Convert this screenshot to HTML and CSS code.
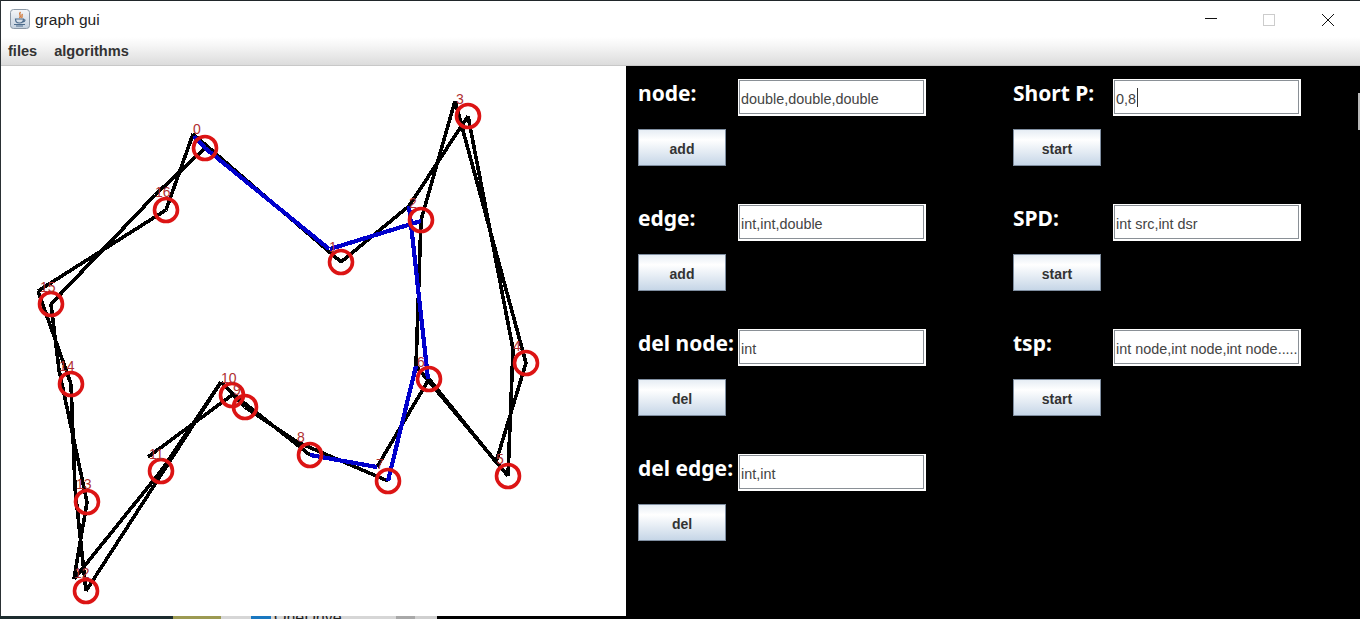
FILE: index.html
```html
<!DOCTYPE html>
<html lang="en">
<head>
  <meta charset="UTF-8" />
  <meta name="viewport" content="width=device-width, initial-scale=1.0"/>
  <title>graph gui</title>
  <link rel="stylesheet" href="styles.css">
</head>
<body>

<div class="window">
  <div class="titlebar">
    <svg class="app-icon" width="20" height="20" viewBox="0 0 20 20">
      <defs>
        <linearGradient id="iconBg" x1="0" y1="0" x2="0" y2="1">
          <stop offset="0" stop-color="#f4f6f8"/>
          <stop offset="1" stop-color="#c3d0de"/>
        </linearGradient>
      </defs>
      <rect x="0.5" y="0.5" width="19" height="19" rx="3" fill="url(#iconBg)" stroke="#8b98a6"/>
      <path d="M10.5 3 C8 5.5 12 6.5 9.5 9 M12.5 5 C11 6.5 13 7.5 11.5 9" fill="none" stroke="#d0702a" stroke-width="1.3"/>
      <path d="M5.5 10 H13.5 C13.5 13 12 14 9.5 14 C7 14 5.5 13 5.5 10 Z M13.5 10.5 C15.5 10.5 15.5 12.5 13 12.8" fill="none" stroke="#4d6c8c" stroke-width="1.2"/>
      <path d="M4 15.5 H15 M6 17 H13" stroke="#4d6c8c" stroke-width="1"/>
    </svg>
    <span class="app-title">graph gui</span>
    <div class="win-controls">
      <span class="win-btn"><svg width="14" height="14" viewBox="0 0 14 14"><path d="M1 5.5 H13" stroke="#111" stroke-width="1"/></svg></span>
      <span class="win-btn"><svg width="14" height="14" viewBox="0 0 14 14"><rect x="1.5" y="1.5" width="11" height="11" fill="none" stroke="#ccc"/></svg></span>
      <span class="win-btn"><svg width="14" height="14" viewBox="0 0 14 14"><path d="M1 1 L13 13 M13 1 L1 13" stroke="#111" stroke-width="1"/></svg></span>
    </div>
  </div>

  <nav class="menubar"><a>files</a><a>algorithms</a></nav>

  <div class="main">
    <div class="canvas">
      <svg width="625" height="550" viewBox="1 66 625 550">
        <g class="edges">
          <line x1="205" y1="148" x2="155" y2="195"/><line x1="166" y1="210" x2="193" y2="134"/>
          <line x1="166" y1="210" x2="38" y2="291"/><line x1="51" y1="304" x2="155" y2="195"/>
          <line x1="51" y1="304" x2="59" y2="370"/><line x1="71" y1="384" x2="38" y2="291"/>
          <line x1="71" y1="384" x2="75" y2="488"/><line x1="87" y1="502" x2="59" y2="370"/>
          <line x1="87" y1="502" x2="74" y2="579"/><line x1="86" y1="591" x2="75" y2="488"/>
          <line x1="86" y1="591" x2="221" y2="382"/><line x1="161" y1="471" x2="74" y2="579"/>
          <line x1="161" y1="471" x2="221" y2="382"/><line x1="232" y1="395" x2="148" y2="457"/>
          <line x1="232" y1="395" x2="233" y2="394"/><line x1="245" y1="407" x2="221" y2="382"/>
          <line x1="245" y1="407" x2="297" y2="442"/><line x1="310" y1="455" x2="233" y2="394"/>
          <line x1="388" y1="481" x2="297" y2="442"/><line x1="429" y1="379" x2="377" y2="467"/>
          <line x1="429" y1="379" x2="496" y2="462"/><line x1="508" y1="476" x2="416" y2="366"/>
          <line x1="508" y1="476" x2="513" y2="349"/><line x1="526" y1="363" x2="496" y2="462"/>
          <line x1="526" y1="363" x2="455" y2="101"/><line x1="468" y1="116" x2="513" y2="349"/>
          <line x1="468" y1="116" x2="409" y2="206"/><line x1="421" y1="220" x2="455" y2="101"/>
          <line x1="421" y1="220" x2="416" y2="366"/><line x1="341" y1="262" x2="409" y2="206"/>
          <line x1="341" y1="262" x2="193" y2="134"/>
        </g>
        <g class="path-edges">
          <polyline points="194,136 205,148 329,249"/>
          <line x1="421" y1="221" x2="330" y2="249"/>
          <line x1="409" y1="206" x2="428" y2="379"/>
          <line x1="416" y1="366" x2="388" y2="481"/>
          <line x1="377" y1="467" x2="310" y2="455"/>
        </g>
        <g class="nodes">
          <circle cx="205" cy="148" r="11.5"/><circle cx="341" cy="262" r="11.5"/>
          <circle cx="421" cy="220" r="11.5"/><circle cx="468" cy="116" r="11.5"/>
          <circle cx="526" cy="363" r="11.5"/><circle cx="508" cy="476" r="11.5"/>
          <circle cx="429" cy="379" r="11.5"/><circle cx="388" cy="481" r="11.5"/>
          <circle cx="310" cy="455" r="11.5"/><circle cx="245" cy="407" r="11.5"/>
          <circle cx="232" cy="395" r="11.5"/><circle cx="161" cy="471" r="11.5"/>
          <circle cx="86" cy="591" r="11.5"/><circle cx="87" cy="502" r="11.5"/>
          <circle cx="71" cy="384" r="11.5"/><circle cx="51" cy="304" r="11.5"/>
          <circle cx="166" cy="210" r="11.5"/>
        </g>
        <g class="labels">
          <text x="193" y="134">0</text><text x="329" y="252">1</text>
          <text x="409" y="208">2</text><text x="456" y="104">3</text>
          <text x="513" y="351">4</text><text x="496" y="464">5</text>
          <text x="417" y="367">6</text><text x="376" y="469">7</text>
          <text x="297" y="442">8</text><text x="233" y="395">9</text>
          <text x="221" y="383">10</text><text x="149" y="459">11</text>
          <text x="74" y="578">12</text><text x="76" y="489">13</text>
          <text x="59" y="371">14</text><text x="40" y="292">15</text>
          <text x="155" y="197">16</text>
        </g>
      </svg>
    </div>

    <div class="panel">
      <div class="group">
        <div class="group-row"><label>node:</label><div class="field">double,double,double</div></div>
        <button class="btn">add</button>
      </div>
      <div class="group">
        <div class="group-row"><label>Short P:</label><div class="field">0,8<span class="caret"></span></div></div>
        <button class="btn">start</button>
      </div>
      <div class="group">
        <div class="group-row"><label>edge:</label><div class="field">int,int,double</div></div>
        <button class="btn">add</button>
      </div>
      <div class="group">
        <div class="group-row"><label>SPD:</label><div class="field">int src,int dsr</div></div>
        <button class="btn">start</button>
      </div>
      <div class="group">
        <div class="group-row"><label>del node:</label><div class="field">int</div></div>
        <button class="btn">del</button>
      </div>
      <div class="group">
        <div class="group-row"><label>tsp:</label><div class="field">int node,int node,int node.....</div></div>
        <button class="btn">start</button>
      </div>
      <div class="group">
        <div class="group-row"><label>del edge:</label><div class="field">int,int</div></div>
        <button class="btn">del</button>
      </div>
      <div class="scroll-sliver"></div>
    </div>
  </div>
</div>

<!-- desktop showing below the window -->
<div class="desktop">
  <span class="seg seg-dark"></span>
  <span class="seg seg-olive"></span>
  <span class="seg seg-grey"></span>
  <span class="seg seg-blue"></span>
  <span class="seg seg-text">OneDrive</span>
  <span class="seg seg-mid"></span>
  <span class="seg seg-light"></span>
</div>

</body>
</html>
```

FILE: styles.css
```css
html, body { margin: 0; padding: 0; height: 619px; overflow: hidden; background: #000; }
body { font-family: "Liberation Sans", Arial, sans-serif; color: #333; }

.window { height: 616px; display: flex; flex-direction: column; border-left: 1px solid #2a3034; box-sizing: border-box; }

.titlebar { height: 37px; flex: none; box-sizing: border-box; border-top: 1px solid #20262a; background: #fff; display: flex; align-items: center; padding-left: 9px; }
.app-icon { margin-right: 5px; }
.app-title { font-size: 15.5px; color: #222; margin-top: 2px; }
.win-controls { margin-left: auto; display: flex; padding-right: 3px; padding-top: 1px; }
.win-btn { width: 58.5px; display: flex; justify-content: center; }

.menubar { height: 29px; flex: none; box-sizing: border-box; border-bottom: 1px solid #c8c8c8; background: linear-gradient(#fff 0%, #f6f6f6 30%, #dcdcdc 100%); display: flex; align-items: center; padding-left: 7px; gap: 17px; }
.menubar a { font-size: 14.6px; font-weight: bold; color: #333; }

.main { flex: 1; display: flex; min-height: 0; }
.canvas { width: 625px; flex: none; background: #fff; }
.canvas svg { display: block; }
.edges line { stroke: #000; stroke-width: 3.6; shape-rendering: crispEdges; }
.path-edges line, .path-edges polyline { stroke: #0000cc; stroke-width: 4.2; fill: none; shape-rendering: crispEdges; }
.nodes circle { fill: none; stroke: #dc1414; stroke-width: 3.6; }
.labels text { font-family: "Liberation Sans", Arial, sans-serif; font-size: 14px; fill: #b02f2f; }

.panel { flex: 1; position: relative; background: #000; box-sizing: border-box; padding: 13px 0 0 12px; display: grid; grid-template-columns: 375px 1fr; grid-auto-rows: 87px; row-gap: 38px; }
.group { display: flex; flex-direction: column; gap: 13px; align-items: flex-start; }
.group-row { display: flex; }
.group-row label { width: 100px; font-family: "Noto Sans", sans-serif; font-weight: bold; font-size: 21px; line-height: 28px; color: #fff; }

.field { width: 188px; height: 37px; box-sizing: border-box; background: #fff; border-style: solid; border-color: #fff; border-width: 1px 2px 2px 1px; box-shadow: inset 0 0 0 1px #8a9096; padding: 4px 0 0 2px; font-size: 14.4px; line-height: 30px; color: #444; white-space: nowrap; overflow: hidden; display: flex; align-items: center; }
.caret { display: inline-block; width: 1px; height: 19px; background: #333; margin-left: 1px; margin-top: -3px; }

.btn { width: 88px; height: 37px; box-sizing: border-box; border: 1px solid #7f8ea0; padding: 2px 0 0 0; background: linear-gradient(#e6edf4 0%, #fff 28%, #c6d6e7 100%); font-family: "Liberation Sans", Arial, sans-serif; font-weight: bold; font-size: 14px; color: #333; }

.scroll-sliver { position: absolute; top: 27px; right: 0; width: 2px; height: 37px; background: #b8b8b8; }

.desktop { height: 3px; display: flex; overflow: hidden; background: #000; }
.seg { display: block; height: 3px; flex: none; }
.seg-dark { width: 173px; background: #1c2c2e; }
.seg-olive { width: 48px; background: #9c9a52; }
.seg-grey { width: 30px; background: #d6d6d6; }
.seg-blue { width: 20px; background: #1a78c0; }
.seg-text { width: 125px; background: #d6d6d6; padding-left: 3px; box-sizing: border-box; font-size: 16px; line-height: 3px; color: #222; overflow: hidden; white-space: nowrap; }
.seg-mid { width: 19px; background: #a8a8a8; }
.seg-light { width: 22px; background: #cfcfcf; }
```
